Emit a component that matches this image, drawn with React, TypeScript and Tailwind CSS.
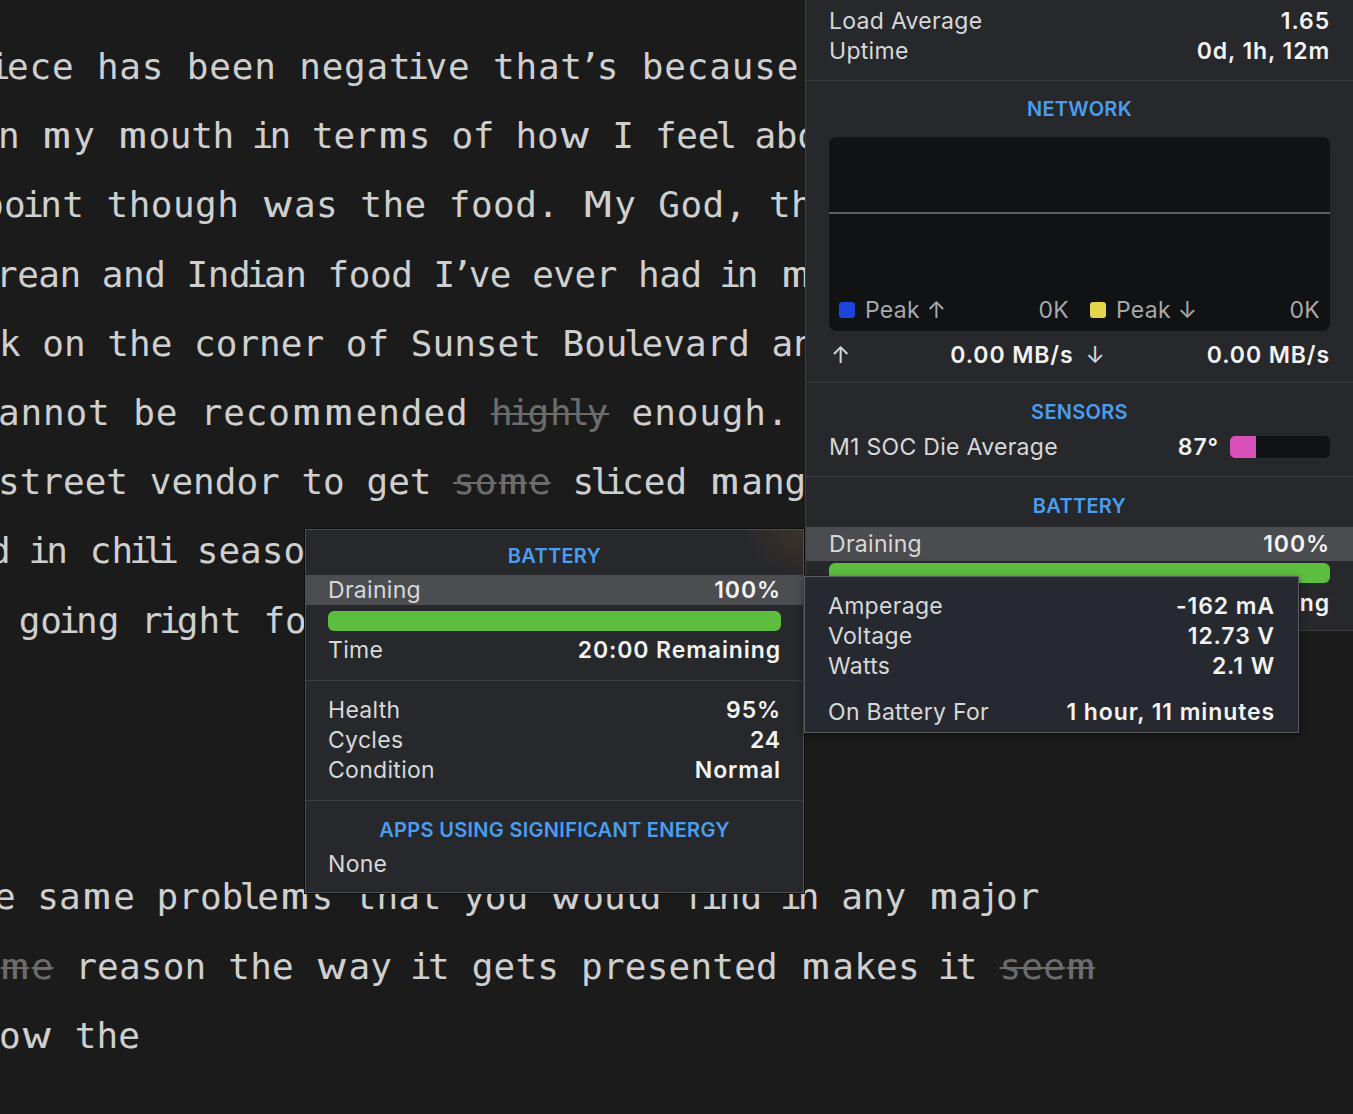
import clsx from "clsx";
import type { ReactNode } from "react";

type Seg = { t: string; del?: boolean };

// iA Writer style spacing: i/l/j/’ sit in a narrow cell, m/w in a wide one
const NARROW = "ilj’";
const WIDE = "mwMW";

const spaced = (text: string, struck: boolean) => {
  const out: ReactNode[] = [];
  let buf = "";
  const flush = () => {
    if (buf) out.push(buf);
    buf = "";
  };
  const strike = struck ? "line-through decoration-2" : "";
  [...text].forEach((ch, k) => {
    if (NARROW.includes(ch)) {
      flush();
      out.push(
        <span key={k} className="inline-flex w-[14px] justify-center">
          <span className={strike}>{ch}</span>
        </span>,
      );
    } else if (WIDE.includes(ch)) {
      flush();
      out.push(
        <span key={k} className="inline-flex w-[32.5px] justify-center">
          <span className={clsx("inline-block scale-x-[1.3]", strike)}>{ch}</span>
        </span>,
      );
    } else {
      buf += ch;
    }
  });
  flush();
  return out;
};

// visible part of each wrapped editor line, shifted left so the first glyph is cut like the window edge
const lines: { cls: string; segs: Seg[] }[] = [
  { cls: "-ml-[7px] tracking-[0.8px]", segs: [{ t: "iece has been negative that’s because the" }] },
  { cls: "-ml-[2px] -tracking-[0.3px]", segs: [{ t: "n my mouth in terms of how I feel about it" }] },
  { cls: "-ml-[18px] tracking-[0.45px]", segs: [{ t: "point though was the food. My God, the" }] },
  { cls: "-ml-[4px] -tracking-[0.5px]", segs: [{ t: "rean and Indian food I’ve ever had in my" }] },
  { cls: "-ml-[1px]", segs: [{ t: "k on the corner of Sunset Boulevard and" }] },
  {
    cls: "-ml-[2px] tracking-[0.85px]",
    segs: [{ t: "annot be recommended " }, { t: "highly", del: true }, { t: " enough." }],
  },
  {
    cls: "-ml-[2px]",
    segs: [{ t: "street vendor to get " }, { t: "some", del: true }, { t: " sliced mango" }],
  },
  { cls: "-ml-[11px]", segs: [{ t: "d in chili seasoning" }] },
  { cls: "-ml-[3px]", segs: [{ t: " going right for" }] },
  { cls: "", segs: [] },
  { cls: "", segs: [] },
  { cls: "", segs: [] },
  { cls: "-ml-[6px]", segs: [{ t: "e same problems that you would find in any major" }] },
  {
    cls: "-ml-[1px] tracking-[0.2px]",
    segs: [
      { t: "me", del: true },
      { t: " reason the way it gets presented makes it " },
      { t: "seem", del: true },
    ],
  },
  { cls: "-ml-[1px]", segs: [{ t: "ow the" }] },
];

const Row = ({ label, value, className }: { label: string; value: string; className?: string }) => (
  <div className={clsx("flex h-[30px] items-center justify-between", className)}>
    <span className="text-[#d8d8d8]">{label}</span>
    <span className="font-semibold tracking-[0.9px] text-[#f3f3f3]">{value}</span>
  </div>
);

const Title = ({ children }: { children: string }) => (
  <div className="flex h-[30px] items-center justify-center text-[20px] font-semibold tracking-[0.3px] text-[#4b9ded]">
    {children}
  </div>
);

const BatteryBar = ({ className }: { className?: string }) => (
  <div className={clsx("h-[20px] rounded-[6px] bg-[#5cbd3f]", className)} />
);

const StatsPanel = () => (
  <div className="absolute left-[805px] top-0 flex h-[631px] w-[548px] flex-col border-b border-l border-[#3e3f43] bg-[#26282b]">
    <div className="border-b border-[#3a3b3f] px-[23px] pb-[14px] pt-[6px]">
      <Row label="Load Average" value="1.65" />
      <Row label="Uptime" value="0d, 1h, 12m" />
    </div>

    <div className="border-b border-[#3a3b3f] pb-[12px] pt-[13px]">
      <Title>NETWORK</Title>
      <div className="mx-[23px] mt-[13px] flex h-[194px] flex-col rounded-[8px] bg-[#111214]">
        <div className="h-[75px]" />
        <div className="h-[2px] bg-[#5d5e60]" />
        <div className="flex-1" />
        <div className="mb-[6px] flex h-[30px] items-center gap-[21px] px-[10px] text-[#a9a9a9]">
          <div className="flex flex-1 items-center">
            <span className="h-[16px] w-[16px] rounded-[3px] bg-[#1d45dc]" />
            <span className="ml-[10px] flex-1">Peak ↑</span>
            <span>0K</span>
          </div>
          <div className="flex flex-1 items-center">
            <span className="h-[16px] w-[16px] rounded-[3px] bg-[#e3d64b]" />
            <span className="ml-[10px] flex-1">Peak ↓</span>
            <span>0K</span>
          </div>
        </div>
      </div>
      <div className="mx-[23px] mt-[9px] flex h-[30px] items-center gap-[12px]">
        <div className="flex flex-1 items-center justify-between">
          <span className="pl-[2px] text-[#d8d8d8]">↑</span>
          <span className="font-semibold tracking-[0.9px] text-[#f3f3f3]">0.00 MB/s</span>
        </div>
        <div className="flex flex-1 items-center justify-between">
          <span className="text-[#d8d8d8]">↓</span>
          <span className="font-semibold tracking-[0.9px] text-[#f3f3f3]">0.00 MB/s</span>
        </div>
      </div>
    </div>

    <div className="border-b border-[#3a3b3f] pb-[14px] pt-[14px]">
      <Title>SENSORS</Title>
      <div className="mx-[23px] mt-[5px] flex h-[30px] items-center">
        <span className="flex-1 text-[#d8d8d8]">M1 SOC Die Average</span>
        <span className="font-semibold tracking-[0.9px] text-[#f3f3f3]">87°</span>
        <div className="ml-[11px] flex h-[22px] w-[100px] overflow-hidden rounded-[5px] bg-[#111214]">
          <div className="w-[26px] bg-[#d950bb]" />
        </div>
      </div>
    </div>

    <div className="pt-[14px]">
      <Title>BATTERY</Title>
      <div className="mt-[6px] bg-[#4b4c50] px-[23px] py-[2px]">
        <Row label="Draining" value="100%" />
      </div>
      <BatteryBar className="mx-[23px] mt-[2px]" />
      <Row label="Time" value="20:00 Remaining" className="mx-[23px] mt-[5px]" />
    </div>
  </div>
);

const BatteryPopup = () => (
  <div className="absolute left-[305px] top-[529px] flex h-[364px] w-[499px] flex-col border border-[#4e4f52] bg-[#27282b] bg-[radial-gradient(ellipse_60px_50px_at_100%_0%,rgba(110,70,42,0.3),transparent)] shadow-[0_0_0_1px_#0d0d0d]">
    <div className="border-b border-[#3c3d41] pb-[15px] pt-[11px]">
      <Title>BATTERY</Title>
      <div className="mt-[4px] bg-[#4c4d51] px-[22px]">
        <Row label="Draining" value="100%" />
      </div>
      <BatteryBar className="mx-[22px] mt-[6px]" />
      <Row label="Time" value="20:00 Remaining" className="mx-[22px] mt-[4px]" />
    </div>
    <div className="border-b border-[#3c3d41] px-[22px] pb-[15px] pt-[14px]">
      <Row label="Health" value="95%" />
      <Row label="Cycles" value="24" />
      <Row label="Condition" value="Normal" />
    </div>
    <div className="pt-[14px]">
      <Title>APPS USING SIGNIFICANT ENERGY</Title>
      <div className="mx-[22px] mt-[4px] flex h-[30px] items-center text-[#d8d8d8]">None</div>
    </div>
  </div>
);

const DetailTooltip = () => (
  <div className="absolute left-[804px] top-[576px] h-[157px] w-[495px] border border-[#5a5b5e] bg-[#262a30] px-[23px] pt-[14px] shadow-[0_2px_6px_rgba(0,0,0,0.5)]">
    <Row label="Amperage" value="-162 mA" />
    <Row label="Voltage" value="12.73 V" />
    <Row label="Watts" value="2.1 W" />
    <Row label="On Battery For" value="1 hour, 11 minutes" className="mt-[16px]" />
  </div>
);

export default function App() {
  return (
    <div className="relative h-[1114px] w-full overflow-hidden bg-[#1b1b1b]">
      <div className="pt-[32px] font-['DejaVu_Sans_Mono',monospace] text-[36px] leading-[69.2px] text-[#cfcfcf]">
        {lines.map((line, i) => (
          <div key={i} className={clsx("whitespace-pre", line.cls)}>
            {line.segs.length === 0
              ? "\u00a0"
              : line.segs.map((seg, j) =>
                  seg.del ? (
                    <span key={j} className="text-[#6c6c6c] line-through decoration-2">
                      {spaced(seg.t, true)}
                    </span>
                  ) : (
                    <span key={j}>{spaced(seg.t, false)}</span>
                  ),
                )}
          </div>
        ))}
      </div>

      <div className="font-['Inter','Noto_Sans',sans-serif] text-[23px] tracking-[0.3px]">
        <StatsPanel />
        <BatteryPopup />
        <DetailTooltip />
      </div>
    </div>
  );
}
